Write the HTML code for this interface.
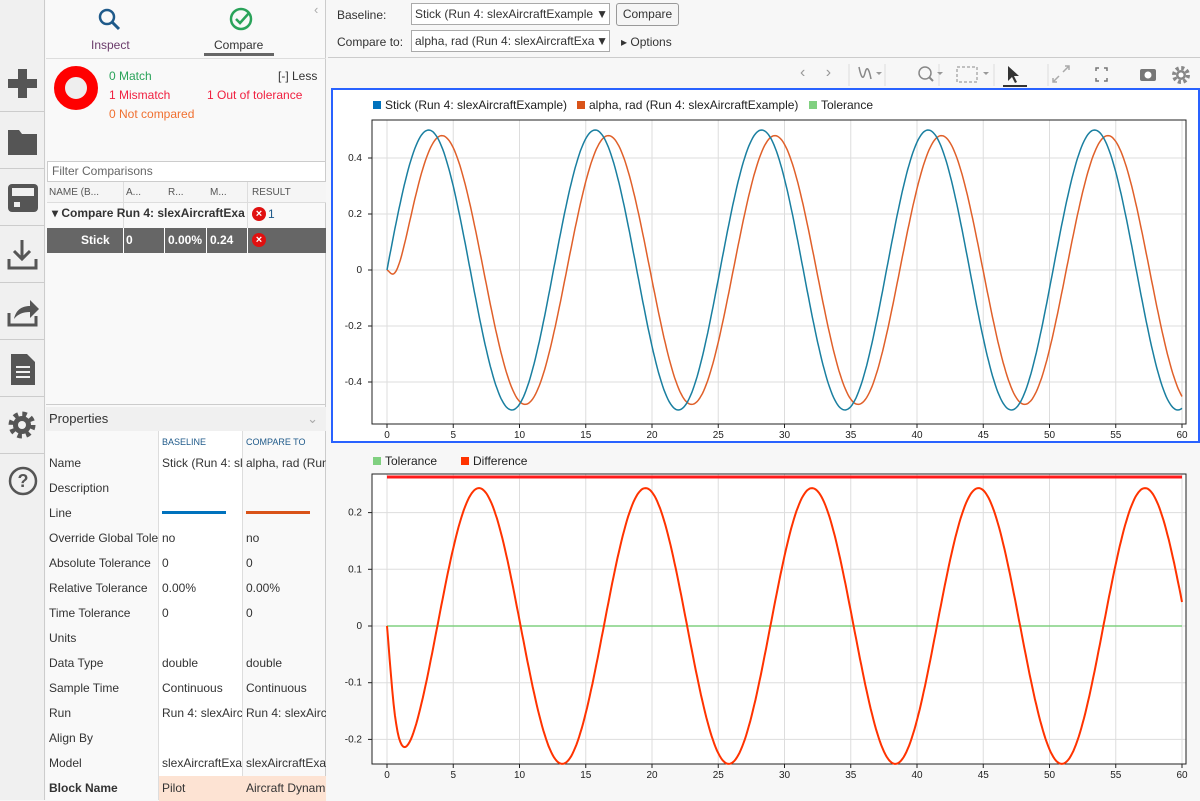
<!DOCTYPE html>
<html><head><meta charset="utf-8"><style>
*{box-sizing:border-box;margin:0;padding:0}
body{width:1200px;height:800px;overflow:hidden;background:#f7f7f7;font-family:"Liberation Sans",sans-serif;font-size:12px;color:#333;position:relative}
.abs{position:absolute}
#bar{left:0;top:0;width:45px;height:800px;background:#f0f0f0;border-right:1px solid #ccc}
.ico{position:absolute;left:0;width:45px;height:57px;border-bottom:1px solid #ccc}
#panel{left:46px;top:0;width:280px;height:800px;background:#f9f9f9;border-right:1px solid #ccc}
.row{position:absolute;left:0;width:280px;height:25px;line-height:25px;font-size:12px}
.row span{position:absolute;white-space:nowrap;overflow:hidden}
.c1{left:3px;width:110px}.c2{left:116px;width:80px}.c3{left:200px;width:80px}
.sel{position:absolute;height:22px;border:1px solid #aaa;background:#fff;line-height:20px;padding-left:3px;font-size:12px;white-space:nowrap;overflow:hidden}
</style></head><body>
<div id="bar" class="abs">
<div class="ico" style="top:55px"><svg width="45" height="57"><path d="M18 14h9v10h10v9H27v10h-9V33H8v-9h10z" fill="#555"/></svg></div>
<div class="ico" style="top:112px"><svg width="45" height="57"><path d="M8 18h11l3 4h15v21H8z" fill="#555"/></svg></div>
<div class="ico" style="top:169px"><svg width="45" height="57"><rect x="8" y="15" width="30" height="28" rx="4" fill="#555"/><rect x="12" y="19" width="22" height="8" fill="#f0f0f0"/><rect x="14" y="33" width="6" height="5" fill="#f0f0f0"/></svg></div>
<div class="ico" style="top:226px"><svg width="45" height="57"><path d="M22 14v18M14 25l8 8 8-8M9 33v9h27v-9" stroke="#555" stroke-width="3" fill="none"/></svg></div>
<div class="ico" style="top:283px"><svg width="45" height="57"><path d="M9 30v12h27v-9" stroke="#555" stroke-width="3" fill="none"/><path d="M14 36c2-10 9-13 16-13v-6l9 9-9 9v-6c-7 0-12 2-16 7z" fill="#555"/></svg></div>
<div class="ico" style="top:340px"><svg width="45" height="57"><path d="M11 14h16l8 8v23H11z" fill="#555"/><path d="M16 27h14M16 32h14M16 37h14" stroke="#f0f0f0" stroke-width="2"/></svg></div>
<div class="ico" style="top:397px"><svg width="45" height="57"><circle cx="22" cy="28" r="10" fill="none" stroke="#555" stroke-width="7" stroke-dasharray="4 3.85"/><circle cx="22" cy="28" r="9" fill="#555"/><circle cx="22" cy="28" r="4" fill="#f0f0f0"/></svg></div>
<div class="abs" style="top:465px;left:7px"><svg width="32" height="32"><circle cx="16" cy="16" r="13" fill="none" stroke="#555" stroke-width="2.5"/><text x="16" y="22" text-anchor="middle" font-size="18" font-weight="bold" fill="#555" font-family="Liberation Sans">?</text></svg></div>
</div>
<div id="panel" class="abs">
<svg class="abs" style="left:50px;top:6px" width="28" height="28"><circle cx="11" cy="11" r="7" fill="none" stroke="#1f5a8a" stroke-width="2.5"/><path d="M16 16l7 7" stroke="#1f5a8a" stroke-width="3"/></svg>
<div class="abs" style="left:45px;top:38px;font-size:12px;color:#6a3a6a">Inspect</div>
<svg class="abs" style="left:182px;top:6px" width="26" height="26"><circle cx="13" cy="13" r="10" fill="none" stroke="#2aa35a" stroke-width="2.5"/><path d="M8 13l4 4 9-10" fill="none" stroke="#2aa35a" stroke-width="2.5"/></svg>
<div class="abs" style="left:168px;top:38px;font-size:12px;color:#333">Compare</div>
<div class="abs" style="left:158px;top:53px;width:70px;height:3px;background:#666"></div>
<div class="abs" style="left:268px;top:2px;color:#aaa;font-size:13px">‹</div>
<div class="abs" style="left:0;top:58px;width:280px;height:1px;background:#ddd"></div>
<div class="abs" style="left:8px;top:66px;width:44px;height:44px;border-radius:50%;border:11px solid #f00;background:#eee"></div>
<div class="abs" style="left:63px;top:69px;color:#2aa35a">0 Match</div>
<div class="abs" style="left:232px;top:69px;color:#333">[-] Less</div>
<div class="abs" style="left:63px;top:88px;color:#f02040">1 Mismatch</div>
<div class="abs" style="left:161px;top:88px;color:#f02040">1 Out of tolerance</div>
<div class="abs" style="left:63px;top:107px;color:#f07030">0 Not compared</div>
<div class="abs" style="left:1px;top:161px;width:279px;height:21px;border:1px solid #ccc;background:#fff;color:#666;padding-left:4px;line-height:19px">Filter Comparisons</div>
<div class="abs" style="left:1px;top:182px;width:279px;height:21px;background:#f5f5f5;border-bottom:1px solid #ddd;font-size:10px;color:#555;line-height:21px">
<span class="abs" style="left:2px">NAME (B...</span><span class="abs" style="left:79px">A...</span><span class="abs" style="left:121px">R...</span><span class="abs" style="left:163px">M...</span><span class="abs" style="left:205px">RESULT</span></div>
<div class="abs" style="left:77px;top:182px;width:1px;height:71px;background:#ddd"></div>
<div class="abs" style="left:201px;top:182px;width:1px;height:71px;background:#ddd"></div>
<div class="abs" style="left:6px;top:206px;font-weight:bold;font-size:12px">▾ Compare Run 4: slexAircraftExa</div>
<div class="abs" style="left:206px;top:207px;width:14px;height:14px;border-radius:50%;background:#e01010;color:#fff;font-size:11px;line-height:14px;text-align:center;font-weight:bold">×</div>
<div class="abs" style="left:222px;top:207px;color:#1f5a8a">1</div>
<div class="abs" style="left:1px;top:228px;width:279px;height:25px;background:#666;color:#fff;font-weight:bold;line-height:24px">
<span class="abs" style="left:34px">Stick</span><span class="abs" style="left:79px">0</span><span class="abs" style="left:121px">0.00%</span><span class="abs" style="left:163px">0.24</span>
<span class="abs" style="left:76px;top:0;width:1px;height:25px;background:#fff"></span><span class="abs" style="left:117px;top:0;width:1px;height:25px;background:#fff"></span><span class="abs" style="left:159px;top:0;width:1px;height:25px;background:#fff"></span><span class="abs" style="left:200px;top:0;width:1px;height:25px;background:#fff"></span>
<span class="abs" style="left:205px;top:5px;width:14px;height:14px;border-radius:50%;background:#e01010;font-size:11px;line-height:14px;text-align:center">×</span></div>
<div class="abs" style="left:0;top:404px;width:280px;height:1px;background:#ccc"></div>
<div class="abs" style="left:0;top:407px;width:280px;height:24px;background:#f0f0f0;line-height:24px;padding-left:3px;font-size:13px">Properties<span class="abs" style="right:8px;color:#aaa">⌄</span></div>
<div class="abs" style="left:113px;top:431px;width:83px;height:369px;background:#fff"></div>
<div class="abs" style="left:196px;top:431px;width:1px;height:369px;background:#ddd"></div>
<div class="abs" style="left:112px;top:431px;width:1px;height:369px;background:#ddd"></div>
<div class="row" style="top:431px;height:20px;line-height:22px;font-size:9px;color:#1f5a8a"><span class="c2">BASELINE</span><span class="c3">COMPARE TO</span></div>
<div class="row" style="top:451px"><span class="c1">Name</span><span class="c2">Stick (Run 4: sl</span><span class="c3">alpha, rad (Run</span></div>
<div class="row" style="top:476px"><span class="c1">Description</span></div>
<div class="row" style="top:501px"><span class="c1">Line</span><span class="c2" style="top:10px;width:64px;height:3px;background:#0072bd"></span><span class="c3" style="top:10px;width:64px;height:3px;background:#d95319"></span></div>
<div class="row" style="top:526px"><span class="c1">Override Global Tole</span><span class="c2">no</span><span class="c3">no</span></div>
<div class="row" style="top:551px"><span class="c1">Absolute Tolerance</span><span class="c2">0</span><span class="c3">0</span></div>
<div class="row" style="top:576px"><span class="c1">Relative Tolerance</span><span class="c2">0.00%</span><span class="c3">0.00%</span></div>
<div class="row" style="top:601px"><span class="c1">Time Tolerance</span><span class="c2">0</span><span class="c3">0</span></div>
<div class="row" style="top:626px"><span class="c1">Units</span></div>
<div class="row" style="top:651px"><span class="c1">Data Type</span><span class="c2">double</span><span class="c3">double</span></div>
<div class="row" style="top:676px"><span class="c1">Sample Time</span><span class="c2">Continuous</span><span class="c3">Continuous</span></div>
<div class="row" style="top:701px"><span class="c1">Run</span><span class="c2">Run 4: slexAirc</span><span class="c3">Run 4: slexAirc</span></div>
<div class="row" style="top:726px"><span class="c1">Align By</span></div>
<div class="row" style="top:751px"><span class="c1">Model</span><span class="c2">slexAircraftExa</span><span class="c3">slexAircraftExa</span></div>
<div class="row" style="top:776px;background:linear-gradient(90deg,transparent 113px,#fde3d3 113px)"><span class="c1" style="font-weight:bold">Block Name</span><span class="c2">Pilot</span><span class="c3">Aircraft Dynam</span></div>
</div>
<div class="abs" style="left:337px;top:8px">Baseline:</div>
<div class="sel" style="left:411px;top:3px;width:199px">Stick (Run 4: slexAircraftExample<span class="abs" style="right:1px;top:0;background:#fff">▼</span></div>
<div class="abs" style="left:616px;top:3px;width:63px;height:23px;border:1px solid #999;border-radius:3px;background:#f5f5f5;text-align:center;line-height:21px">Compare</div>
<div class="abs" style="left:337px;top:35px">Compare to:</div>
<div class="sel" style="left:411px;top:30px;width:199px">alpha, rad (Run 4: slexAircraftExa<span class="abs" style="right:1px;top:0;background:#fff">▼</span></div>
<div class="abs" style="left:621px;top:35px">▸ Options</div>
<div class="abs" style="left:328px;top:57px;width:872px;height:1px;background:#ccc"></div>
<div class="abs" style="left:800px;top:64px;color:#999;font-size:16px;letter-spacing:8px">‹ ›</div>
<svg class="abs" style="left:845px;top:62px" width="355" height="26">
<path d="M4 2v22M40 2v22M94 2v22M149 2v22M203 2v22" stroke="#ddd"/>
<path d="M14 5c2 10 4 14 6 6s4-4 6 6" fill="none" stroke="#888" stroke-width="1.5"/><path d="M31 10l3 3 3-3" fill="#999"/>
<circle cx="80" cy="11" r="6" fill="none" stroke="#888" stroke-width="1.5"/><path d="M84 15l4 4" stroke="#888" stroke-width="2"/><path d="M92 10l3 3 3-3" fill="#999"/>
<rect x="112" y="5" width="20" height="15" fill="none" stroke="#888" stroke-dasharray="3 2"/><path d="M138 10l3 3 3-3" fill="#999"/>
<path d="M163 4v15l4-4 3 6 2-1-3-6h5z" fill="#333"/><rect x="158" y="23" width="24" height="2" fill="#333"/>
<path d="M208 20l6-6M218 10l6-6M220 4h4v4M208 16v4h4" stroke="#aaa" fill="none" stroke-width="1.5"/>
<path d="M254 6h-3v3M259 6h3v3M254 19h-3v-3M259 19h3v-3" stroke="#777" fill="none" stroke-width="1.5"/>
<rect x="295" y="7" width="16" height="12" rx="2" fill="#777"/><circle cx="303" cy="13" r="3.5" fill="#fff"/>
<circle cx="336" cy="13" r="7" fill="none" stroke="#888" stroke-width="4" stroke-dasharray="3 2.5"/><circle cx="336" cy="13" r="5" fill="#888"/><circle cx="336" cy="13" r="2.5" fill="#fff"/>
</svg>
<div class="abs" style="left:331px;top:88px;width:869px;height:355px;border:2px solid #2962ff;background:#fff"></div>
<svg id="plots" class="abs" style="left:0;top:0" width="1200" height="800"></svg>
<script>
var s=document.getElementById('plots'),h='';
function X(t){return 387+t*13.25}
function line(x1,y1,x2,y2,c,w){h+='<line x1="'+x1+'" y1="'+y1+'" x2="'+x2+'" y2="'+y2+'" stroke="'+c+'" stroke-width="'+(w||1)+'"/>'}
function txt(x,y,t,a){h+='<text x="'+x+'" y="'+y+'" font-size="10" fill="#222" text-anchor="'+(a||'middle')+'" font-family="Liberation Sans">'+t+'</text>'}
function leg(x,y,c,t){h+='<rect x="'+x+'" y="'+(y-8)+'" width="8" height="8" fill="'+c+'"/>';h+='<text x="'+(x+12)+'" y="'+y+'" font-size="12" fill="#222" font-family="Liberation Sans">'+t+'</text>'}
leg(373,109,'#0072bd','Stick (Run 4: slexAircraftExample)');leg(577,109,'#d95319','alpha, rad (Run 4: slexAircraftExample)');leg(809,109,'#80d080','Tolerance');
leg(373,465,'#80d080','Tolerance');leg(461,465,'#ff3300','Difference');
h+='<rect x="372" y="474" width="814" height="290" fill="#fff"/>';
function axes(top,bot,y0,k,ticks,fmt){
 for(var t=0;t<=60;t+=5){line(X(t),top,X(t),bot,'#ddd');line(X(t),bot,X(t),bot+4,'#222');txt(X(t),bot+14,t)}
 ticks.forEach(function(v){var y=y0-v*k;line(372,y,1186,y,'#ddd');line(368,y,372,y,'#222');txt(362,y+3,fmt(v),'end')});
 h+='<rect x="372" y="'+top+'" width="814" height="'+(bot-top)+'" fill="none" stroke="#222"/>';
}
axes(120,424,270,280,[0.4,0.2,0,-0.2,-0.4],function(v){return v==0?'0':v.toFixed(1)});
axes(474,764,626,567,[0.2,0.1,0,-0.1,-0.2],function(v){return v==0?'0':v.toFixed(1)});
function B(t){return 0.5*Math.sin(0.5*t)}
function O(t){var a=0.48*Math.sin(0.5),b=3*a-0.24*Math.cos(0.5);return 0.48*Math.sin(0.5*(t-1))+Math.exp(-3*t)*(a+b*t)}
function path(f,y0,k,c,w){var d='';for(var t=0;t<=60.001;t+=0.1){d+=(t==0?'M':'L')+X(t).toFixed(1)+' '+(y0-f(t)*k).toFixed(1)}h+='<path d="'+d+'" fill="none" stroke="'+c+'" stroke-width="'+w+'"/>'}
path(O,270,280,'#e0602a',1.5);path(B,270,280,'#1a7fa0',1.5);
line(387,626,1182,626,'#80d080',1.5);
line(387,477,1182,477,'#ff1a1a',3);
path(function(t){return O(t)-B(t)},626,567,'#ff3300',2);
s.innerHTML=h;
</script>
</body></html>
